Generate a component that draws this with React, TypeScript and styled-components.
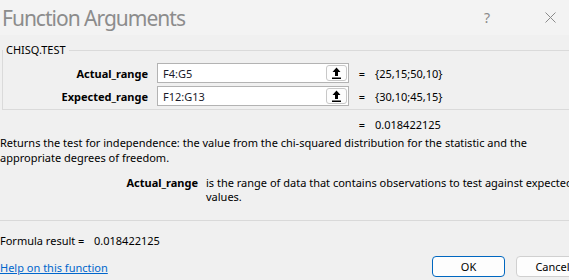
import React from "react";
import styled, { createGlobalStyle } from "styled-components";

const Global = createGlobalStyle`
  html, body {
    margin: 0;
    padding: 0;
    overflow: hidden;
    background: #f0f0f0;
  }
  body {
    font-family: "Noto Sans", "Open Sans", sans-serif;
    font-size: 11px;
    color: #000;
  }
`;

const Dialog = styled.div`
  width: 600px;
  height: 280px;
  display: flex;
  flex-direction: column;
  background: #f0f0f0;
`;

const TitleBar = styled.div`
  height: 35px;
  display: flex;
  align-items: center;
  background: #f3f3f3;
  padding-left: 2px;
`;

const Title = styled.div`
  flex: 1;
  font-size: 21px;
  color: #8c8c8c;
  letter-spacing: -1px;
`;

const TitleButton = styled.div<{ $mr: number }>`
  width: 20px;
  margin-right: ${(p) => p.$mr}px;
  display: flex;
  justify-content: center;
  color: #8a8a8a;
  font-size: 14px;
`;

const Body = styled.div`
  display: flex;
  flex-direction: column;
  flex: 1;
`;

const Group = styled.fieldset`
  margin: 8px 0 0 2px;
  padding: 6px 0 2px 0;
  border: 1px solid #dadada;
  width: 620px;
  box-sizing: border-box;
  height: 67px;
  min-width: 0;
`;

const Legend = styled.legend`
  padding: 0 3px;
  margin-left: 0;
  font-size: 11px;
  line-height: 14px;
`;

const ArgGrid = styled.div`
  display: grid;
  grid-template-columns: 145px 192px 8px auto;
  column-gap: 9px;
  row-gap: 3px;
  align-items: center;
`;

const ArgLabel = styled.div`
  font-weight: bold;
  text-align: right;
`;

const Field = styled.div`
  height: 20px;
  box-sizing: border-box;
  border: 1px solid #b3b3b3;
  background: #fff;
  display: flex;
  align-items: center;
  padding-left: 5px;
  padding-right: 1px;
`;

const FieldText = styled.div`
  flex: 1;
  color: #1a1a2a;
`;

const RefButton = styled.div`
  width: 21px;
  height: 16px;
  box-sizing: border-box;
  border: 1px solid #c8c8c8;
  border-radius: 3px;
  background: #fdfdfd;
  display: flex;
  align-items: center;
  justify-content: center;
`;

const Eq = styled.div`
  text-align: center;
`;

const Value = styled.div`
  white-space: nowrap;
`;

const ResultGrid = styled(ArgGrid)`
  padding-left: 3px;
  margin-top: 7px;
  height: 14px;
`;

const Description = styled.div`
  margin-top: 4px;
  line-height: 15px;
  width: 540px;
`;

const ArgDesc = styled.div`
  display: grid;
  grid-template-columns: 198px 1fr;
  column-gap: 8px;
  margin-top: 11px;
  line-height: 14px;
  height: 44px;
`;

const ArgDescLabel = styled.div`
  font-weight: bold;
  text-align: right;
`;

const ArgDescText = styled.div`
  width: 380px;
`;

const Separator = styled.div`
  height: 1px;
  background: #d9d9d9;
`;

const FormulaRow = styled.div`
  margin-top: 11px;
  display: flex;
  height: 16px;
  align-items: center;
`;

const FormulaLabel = styled.div`
  width: 94px;
`;

const Footer = styled.div`
  display: flex;
  align-items: center;
  margin-top: 8px;
`;

const HelpLink = styled.a`
  color: #0066cc;
  text-decoration: underline;
  flex: 1;
  cursor: pointer;
  padding-top: 2px;
`;

const Button = styled.button<{ $primary?: boolean }>`
  width: 73px;
  height: 21px;
  margin-right: 11px;
  box-sizing: border-box;
  border: 1px solid ${(p) => (p.$primary ? "#0067c0" : "#d0d0d0")};
  border-radius: 4px;
  background: #fdfdfd;
  font-family: inherit;
  font-size: 11px;
  color: #000;
  padding: 0;
`;

const UploadIcon = () => (
  <svg width="9" height="12" viewBox="0 0 9 12">
    <path d="M4.5 0.5 L8.5 5 L6 5 L6 9 L3 9 L3 5 L0.5 5 Z" fill="#000" />
    <rect x="0" y="10.5" width="9" height="1.5" fill="#000" />
  </svg>
);

export default function App() {
  return (
    <Dialog>
      <Global />
      <TitleBar>
        <Title>Function Arguments</Title>
        <TitleButton $mr={43}>?</TitleButton>
        <TitleButton $mr={40}>
          <svg width="11" height="11" viewBox="0 0 11 11">
            <path d="M0.5 0.5 L10.5 10.5 M10.5 0.5 L0.5 10.5" stroke="#8a8a8a" strokeWidth="1" />
          </svg>
        </TitleButton>
      </TitleBar>
      <Body>
        <Group>
          <Legend>CHISQ.TEST</Legend>
          <ArgGrid>
            <ArgLabel>Actual_range</ArgLabel>
            <Field>
              <FieldText>F4:G5</FieldText>
              <RefButton>
                <UploadIcon />
              </RefButton>
            </Field>
            <Eq>=</Eq>
            <Value>{"{25,15;50,10}"}</Value>
            <ArgLabel>Expected_range</ArgLabel>
            <Field>
              <FieldText>F12:G13</FieldText>
              <RefButton>
                <UploadIcon />
              </RefButton>
            </Field>
            <Eq>=</Eq>
            <Value>{"{30,10;45,15}"}</Value>
          </ArgGrid>
        </Group>
        <ResultGrid>
          <div />
          <div />
          <Eq>=</Eq>
          <Value>0.018422125</Value>
        </ResultGrid>
        <Description>
          Returns the test for independence: the value from the chi-squared distribution for the statistic and the
          appropriate degrees of freedom.
        </Description>
        <ArgDesc>
          <ArgDescLabel>Actual_range</ArgDescLabel>
          <ArgDescText>is the range of data that contains observations to test against expected values.</ArgDescText>
        </ArgDesc>
        <Separator />
        <FormulaRow>
          <FormulaLabel>Formula result =</FormulaLabel>
          <div>0.018422125</div>
        </FormulaRow>
        <Footer>
          <HelpLink>Help on this function</HelpLink>
          <Button $primary>OK</Button>
          <Button>Cancel</Button>
        </Footer>
      </Body>
    </Dialog>
  );
}
